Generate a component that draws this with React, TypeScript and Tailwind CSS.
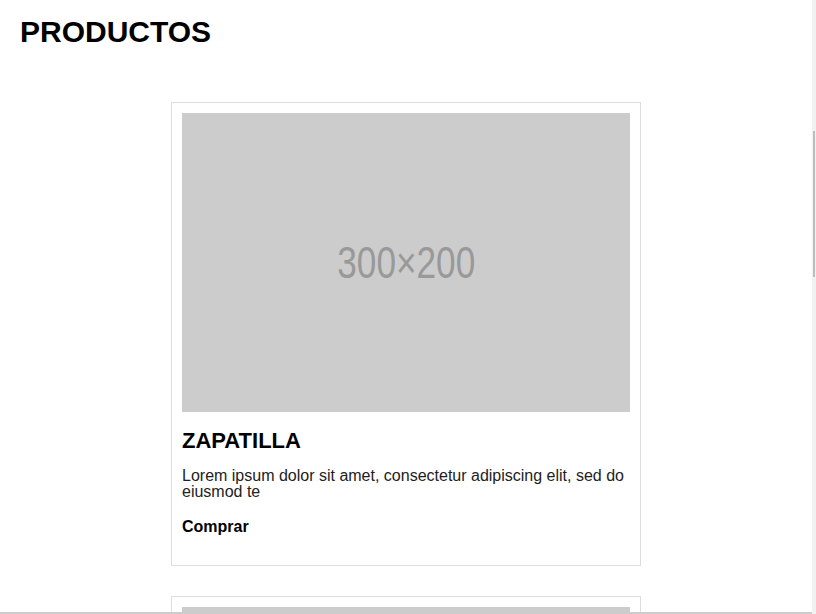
import React from 'react'

interface Producto {
  id: number
  nombre: string
  descripcion: string
}

const productos: Producto[] = [
  { id: 1, nombre: 'ZAPATILLA', descripcion: 'Lorem ipsum dolor sit amet, consectetur adipiscing elit, sed do eiusmod te' },
  { id: 2, nombre: 'ZAPATILLA', descripcion: 'Lorem ipsum dolor sit amet, consectetur adipiscing elit, sed do eiusmod te' },
]

function Card({ producto }: { producto: Producto }) {
  return (
    <div className="w-[470px] shrink-0 border border-[#dddddd] p-[10px] pb-[30px]">
      {/* Placeholder */}
      <div className="h-[299px] bg-[#cccccc] flex items-center justify-center">
        <span className="text-[44px] leading-none text-[#999999] scale-x-[0.8]">
          300×200
        </span>
      </div>
      <h2 className="mt-[18px] text-[22px] leading-[22px] font-bold text-black">{producto.nombre}</h2>
      <p className="mt-[16px] text-base leading-[16px] text-[#222222]">{producto.descripcion}</p>
      <a className="block mt-[19px] text-base leading-[16px] font-bold text-black">Comprar</a>
    </div>
  )
}

export default function App() {
  return (
    <div className="flex h-[614px] w-[816px] overflow-hidden bg-white font-['Liberation_Sans',Arial,sans-serif]">
      {/* Page */}
      <div className="flex-1 flex flex-col overflow-hidden border-b-2 border-[#cccccc]">
        <h1 className="px-5 pt-[17px] text-[30px] leading-[30px] font-bold text-black">PRODUCTOS</h1>
        <div className="mt-[55px] flex flex-col items-center gap-[30px]">
          {productos.map((p) => (
            <Card key={p.id} producto={p} />
          ))}
        </div>
      </div>

      {/* Scrollbar */}
      <div className="w-[4px] bg-[#f1f1f1] flex justify-center">
        <div className="mt-[131px] h-[146px] w-[2px] bg-[#bdbdbd]" />
      </div>
    </div>
  )
}
